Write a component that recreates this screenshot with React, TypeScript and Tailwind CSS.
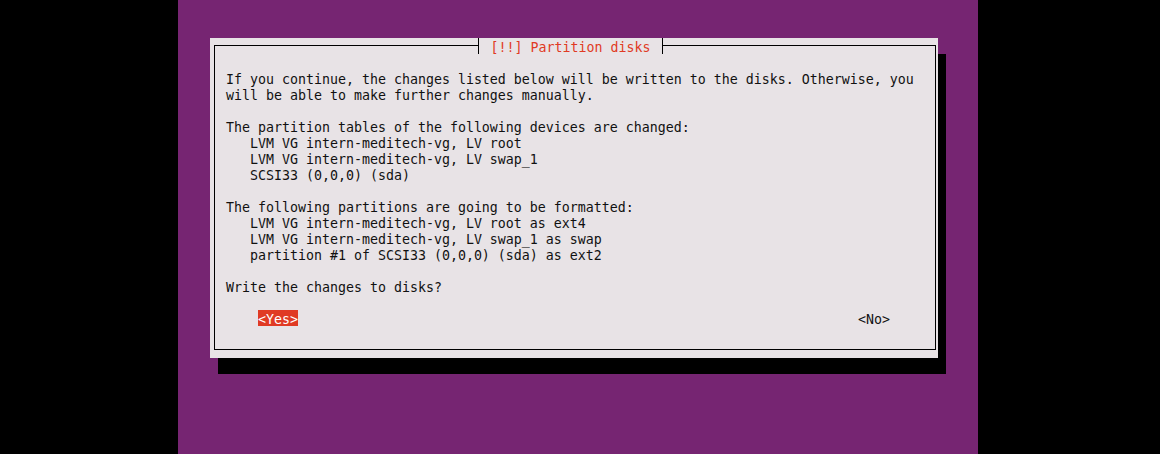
const lines = [
  "",
  "If you continue, the changes listed below will be written to the disks. Otherwise, you",
  "will be able to make further changes manually.",
  "",
  "The partition tables of the following devices are changed:",
  "   LVM VG intern-meditech-vg, LV root",
  "   LVM VG intern-meditech-vg, LV swap_1",
  "   SCSI33 (0,0,0) (sda)",
  "",
  "The following partitions are going to be formatted:",
  "   LVM VG intern-meditech-vg, LV root as ext4",
  "   LVM VG intern-meditech-vg, LV swap_1 as swap",
  "   partition #1 of SCSI33 (0,0,0) (sda) as ext2",
  "",
  "Write the changes to disks?",
  "",
];

export default function App() {
  return (
    <div
      className="w-[1160px] h-[454px] bg-black flex text-[13.29px] leading-[20px] text-[#111]"
      style={{ fontFamily: '"DejaVu Sans Mono", "Liberation Mono", monospace' }}
    >
      <div className="ml-[178px] w-[800px] h-full bg-[#762572] pt-[38px] pl-[32px]">
        <div className="relative w-[728px] h-[320px] bg-[#e8e3e6] shadow-[8px_16px_0_0_#000] pt-[7px] pl-[4px] pr-[2px] pb-[8px]">
          <div className="h-full border border-black pl-[11px] pt-[8px]">
            {lines.map((l, i) => (
              <div key={i} className="h-[16px] whitespace-pre">
                {l}
              </div>
            ))}
            <div className="h-[16px] flex whitespace-pre">
              <span className="ml-[32px] h-[16px] bg-[#e03a24] text-white">&lt;Yes&gt;</span>
              <span className="ml-[560px] h-[16px]">&lt;No&gt;</span>
            </div>
          </div>

          <div className="absolute left-[268px] top-0 h-[16px] w-[185px] bg-[#e8e3e6] border-x border-black flex justify-center whitespace-pre text-[#e03a24]">
            [!!] Partition disks
          </div>
        </div>
      </div>
    </div>
  );
}
